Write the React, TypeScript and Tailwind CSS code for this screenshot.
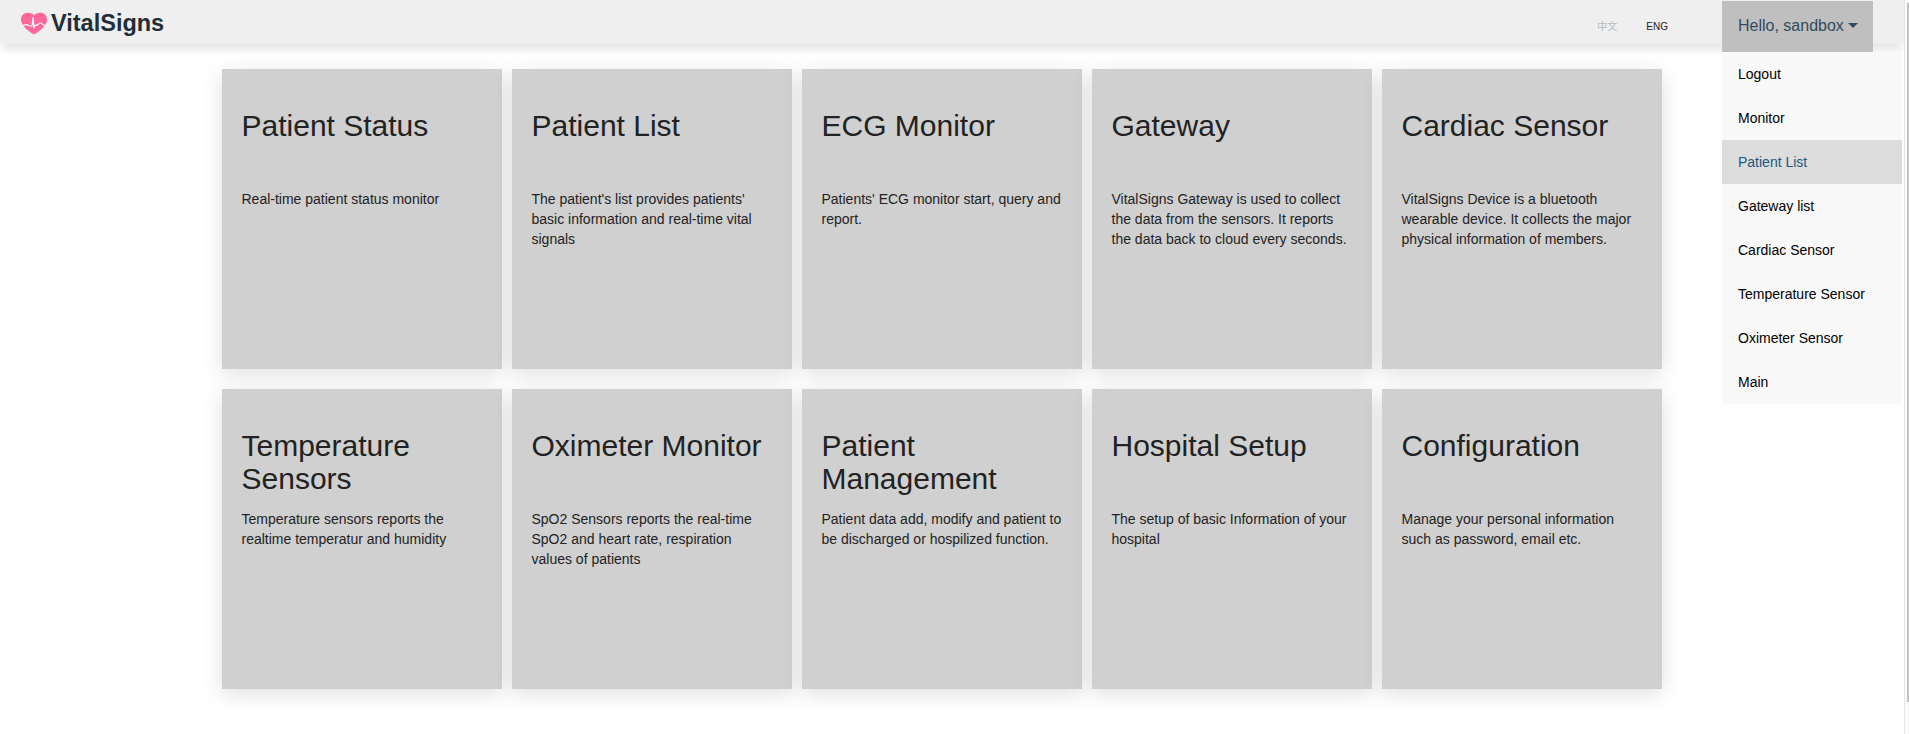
const CARDS = [
  {
    title: 'Patient Status',
    description: 'Real-time patient status monitor',
  },
  {
    title: 'Patient List',
    description:
      "The patient's list provides patients' basic information and real-time vital signals",
  },
  {
    title: 'ECG Monitor',
    description: "Patients' ECG monitor start, query and report.",
  },
  {
    title: 'Gateway',
    description:
      'VitalSigns Gateway is used to collect the data from the sensors. It reports the data back to cloud every seconds.',
  },
  {
    title: 'Cardiac Sensor',
    description:
      'VitalSigns Device is a bluetooth wearable device. It collects the major physical information of members.',
  },
  {
    title: 'Temperature Sensors',
    description:
      'Temperature sensors reports the realtime temperatur and humidity',
  },
  {
    title: 'Oximeter Monitor',
    description:
      'SpO2 Sensors reports the real-time SpO2 and heart rate, respiration values of patients',
  },
  {
    title: 'Patient Management',
    description:
      'Patient data add, modify and patient to be discharged or hospilized function.',
  },
  {
    title: 'Hospital Setup',
    description: 'The setup of basic Information of your hospital',
  },
  {
    title: 'Configuration',
    description:
      'Manage your personal information such as password, email etc.',
  },
]

const MENU = [
  'Logout',
  'Monitor',
  'Patient List',
  'Gateway list',
  'Cardiac Sensor',
  'Temperature Sensor',
  'Oximeter Sensor',
  'Main',
]

function Logo() {
  return (
    <a href="#" className="flex items-center h-[46px] pl-[21px]">
      <svg viewBox="0 0 26 23" className="w-[26px] h-[23px]">
        <path
          d="M13 22.5 C9 20 0 14.5 0 7.4 C0 3.4 3 .7 6.8 .7 C9.6 .7 11.8 1.8 13 3.4 C14.2 1.8 16.4 .7 19.2 .7 C23 .7 26 3.4 26 7.4 C26 14.5 17 20 13 22.5 Z"
          fill="#ff6699"
        />
        <path
          d="M1.5 13.2 C4 13.6 4.5 12.2 6.5 12.8 C8 13.2 8.2 14.4 9.6 14.2 L11 14 L12.1 5.5 L12.9 16 L14 13.2 L16.2 13.4 C17.5 11.6 18.6 10.4 20.2 11.2 C22 12 22 13.8 24.5 13.2"
          fill="none"
          stroke="#fff"
          strokeWidth="1.2"
          strokeLinejoin="round"
        />
      </svg>
      <span className="ml-[4px] pt-px text-[23.5px] leading-none font-bold text-[#212d38]">
        VitalSigns
      </span>
    </a>
  )
}

function UserMenu() {
  return (
    <div className="relative w-[151px] h-[51px] mt-px mr-[31px]">
      <button className="flex items-center w-full h-full pl-4 pb-[2px] bg-[#bfbfbf] text-base text-[#34495e]">
        Hello, sandbox
        <span className="ml-[4px] border-x-[5px] border-t-[5px] border-x-transparent border-t-[#34495e]"></span>
      </button>

      <ul className="absolute left-0 top-full z-10 w-[180px] bg-[#f9f9f9]">
        {MENU.map((item) => (
          <li
            key={item}
            className={
              item === 'Patient List'
                ? 'h-11 px-4 leading-[44px] bg-[#ddd] text-[#1b587f]'
                : 'h-11 px-4 leading-[44px] text-black'
            }
          >
            {item}
          </li>
        ))}
      </ul>
    </div>
  )
}

export default function App() {
  return (
    <div className="flex h-[734px] overflow-hidden bg-white text-sm font-['Liberation_Sans',Arial,'Noto_Sans_CJK_TC',sans-serif]">
      <div className="w-[1904px]">
        <header className="flex items-start justify-between h-11 bg-[#efefef] shadow-[0_8px_8px_-2px_rgba(0,0,0,0.1)]">
          <Logo />

          <div className="flex">
            <div className="flex pt-[20px] pr-[54px] text-[10px] leading-[14px]">
              <span className="w-[49px] text-[#b8b8b8]">中文</span>
              <span className="text-[#222]">ENG</span>
            </div>
            <UserMenu />
          </div>
        </header>

        <main className="grid grid-cols-[repeat(5,280px)] gap-x-[10px] gap-y-5 pt-[25px] pl-[222px]">
          {CARDS.map((card) => (
            <section
              key={card.title}
              className="h-[300px] pl-[19.5px] pr-5 pt-10 bg-[#d0d0d0] text-[#222] shadow-[0_5px_20px_rgba(0,0,0,0.13)]"
            >
              <h2 className="h-20 text-3xl leading-[33px]">{card.title}</h2>
              <p className="leading-5">{card.description}</p>
            </section>
          ))}
        </main>
      </div>

      <div className="flex justify-end w-[5px] border-l border-[#e8e8e8] bg-[#fafafa]">
        <div className="w-[2px] h-[699px] mt-[3px] bg-[#c1c1c1]"></div>
      </div>
    </div>
  )
}
